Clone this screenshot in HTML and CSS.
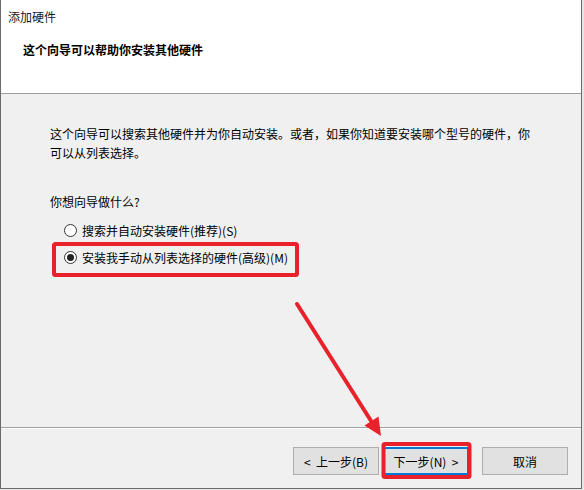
FILE: index.html
```html
<!DOCTYPE html>
<html lang="zh-CN">
<head>
<meta charset="utf-8">
<title>添加硬件</title>
<link rel="stylesheet" href="styles.css">
</head>
<body>
<div class="window">
  <div class="header">
    <div class="title">添加硬件</div>
    <div class="subtitle">这个向导可以帮助你安装其他硬件</div>
  </div>
  <div class="content">
    <p class="desc">这个向导可以搜索其他硬件并为你自动安装。或者，如果你知道要安装哪个型号的硬件，你可以从列表选择。</p>
    <p class="question">你想向导做什么?</p>
    <div class="options">
      <div class="option"><span class="radio"></span><span>搜索并自动安装硬件(推荐)(S)</span></div>
      <div class="option"><span class="radio checked"></span><span>安装我手动从列表选择的硬件(高级)(M)</span></div>
    </div>
  </div>
  <div class="footer">
    <button class="btn">&lt;&nbsp; 上一步(B)</button>
    <button class="btn default">下一步(N)&nbsp; &gt;</button>
    <button class="btn cancel">取消</button>
  </div>
  <svg class="annotations" width="584" height="490" viewBox="0 0 584 490">
    <rect x="54" y="244" width="243" height="31" rx="1.5" fill="none" stroke="#e8212b" stroke-width="4"/>
    <rect x="383.5" y="444" width="86" height="33" rx="1.5" fill="none" stroke="#e8212b" stroke-width="4"/>
    <line x1="297" y1="304" x2="373" y2="424" stroke="#e8212b" stroke-width="4" stroke-linecap="round"/>
    <polygon points="381,436 364.5,425.5 378.5,416.5" fill="#e8212b"/>
  </svg>
</div>
</body>
</html>
```

FILE: styles.css
```css
html, body {
  margin: 0;
  padding: 0;
}
body {
  background: #e6e6e6;
  font-family: "Noto Sans CJK SC", "Microsoft YaHei", sans-serif;
  font-size: 12px;
  color: #000;
}
.window {
  position: relative;
  width: 580px;
  height: 488px;
  border-left: 1px solid #6b6b6b;
  border-right: 1px solid #6b6b6b;
  border-bottom: 1px solid #6b6b6b;
  background: #f0f0f0;
  display: flex;
  flex-direction: column;
}
.header {
  height: 93px;
  background: #fff;
  border-bottom: 1px solid #a0a0a0;
  box-sizing: content-box;
}
.title {
  padding: 8px 0 0 7px;
  line-height: 18px;
  color: #1a1a1a;
}
.subtitle {
  margin-top: 15px;
  padding-left: 22px;
  line-height: 18px;
  font-weight: bold;
}
.content {
  height: 333px;
  border-bottom: 1px solid #a0a0a0;
  padding-left: 49px;
  box-sizing: content-box;
}
.desc {
  margin: 30px 0 0 0;
  width: 490px;
  line-height: 19px;
}
.question {
  margin: 30px 0 0 0;
  line-height: 19px;
}
.options {
  margin-top: 6px;
  padding-left: 14px;
}
.option {
  display: flex;
  align-items: center;
  height: 27px;
  gap: 5px;
}
.radio {
  width: 11px;
  height: 11px;
  border: 1px solid #333;
  border-radius: 50%;
  background: #fff;
  display: flex;
  align-items: center;
  justify-content: center;
  flex: none;
}
.radio.checked::after {
  content: "";
  width: 7px;
  height: 7px;
  border-radius: 50%;
  background: #222;
}
.footer {
  flex: 1;
  border-top: 1px solid #fff;
  display: flex;
  align-items: flex-start;
  padding: 18px 13px 0 0;
  justify-content: flex-end;
}
.btn {
  width: 86px;
  height: 28px;
  box-sizing: border-box;
  border: 1px solid #adadad;
  background: #e1e1e1;
  font-family: "Noto Sans CJK SC", "Microsoft YaHei", sans-serif;
  font-size: 12px;
  color: #000;
  padding: 0;
  margin: 0;
}
.btn.default {
  margin-left: 4px;
  border: 2px solid #0078d7;
}
.btn.cancel {
  margin-left: 13px;
}
.annotations {
  position: absolute;
  left: -1px;
  top: 0;
  pointer-events: none;
}
```
